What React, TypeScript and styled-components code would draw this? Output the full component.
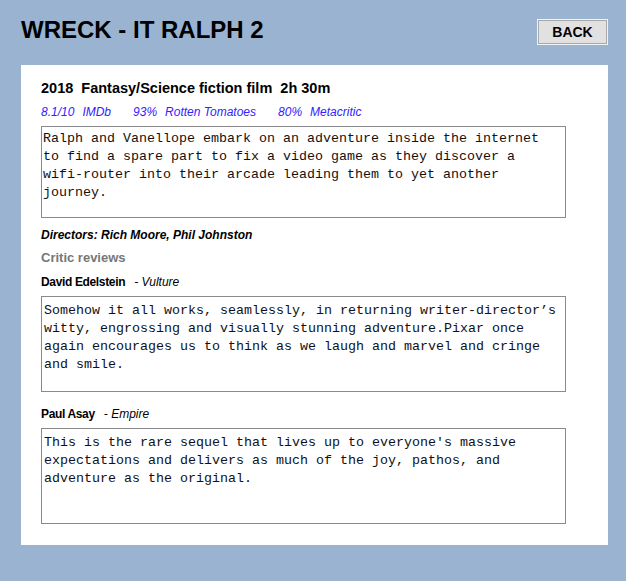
import styled, { createGlobalStyle } from "styled-components";

const GlobalStyle = createGlobalStyle`
  body {
    margin: 0;
    background-color: #99b3d1;
    font-family: "Liberation Sans", Arial, sans-serif;
    color: #000;
  }
`;

type Rating = { value: string; source: string };
type Review = { critic: string; outlet: string; text: string };

const ratings: Rating[] = [
  { value: "8.1/10", source: "IMDb" },
  { value: "93%", source: "Rotten Tomatoes" },
  { value: "80%", source: "Metacritic" },
];

const reviews: Review[] = [
  {
    critic: "David Edelstein",
    outlet: "Vulture",
    text: "Somehow it all works, seamlessly, in returning writer-director\u2019s witty, engrossing and visually stunning adventure.Pixar once again encourages us to think as we laugh and marvel and cringe and smile.",
  },
  {
    critic: "Paul Asay",
    outlet: "Empire",
    text: "This is the rare sequel that lives up to everyone's massive expectations and delivers as much of the joy, pathos, and adventure as the original.",
  },
];

const App = () => {
  return (
    <>
      <GlobalStyle />
      <Page>
        <Header>
          <Title>WRECK - IT RALPH 2</Title>
          <BackBtn>BACK</BackBtn>
        </Header>

        <Card>
          <Facts>2018  Fantasy/Science fiction film  2h 30m</Facts>
          <Ratings>
            {ratings.map((r) => (
              <RatingItem key={r.source}>
                {r.value}
                <RatingSource>{r.source}</RatingSource>
              </RatingItem>
            ))}
          </Ratings>

          <TextBox $height={92} $top={3} $left={1}>
            Ralph and Vanellope embark on an adventure inside the internet to
            find a spare part to fix a video game as they discover a
            wifi-router into their arcade leading them to yet another journey.
          </TextBox>

          <Directors>Directors: Rich Moore, Phil Johnston</Directors>
          <SectionTitle>Critic reviews</SectionTitle>

          {reviews.map((rv, i) => (
            <ReviewBlock key={rv.critic} $first={i === 0}>
              <Critic>
                <CriticName>{rv.critic}</CriticName>
                <Outlet>- {rv.outlet}</Outlet>
              </Critic>
              <TextBox $height={96} $top={5} $left={2}>
                {rv.text}
              </TextBox>
            </ReviewBlock>
          ))}
        </Card>
      </Page>
    </>
  );
};

const Page = styled.div`
  display: flex;
  flex-direction: column;
  width: 626px;
`;

const Header = styled.header`
  display: flex;
  justify-content: space-between;
  align-items: flex-start;
  padding: 16px 18px 0 21px;
`;

const Title = styled.h1`
  margin: 0;
  font-size: 24px;
  line-height: 28px;
  font-weight: bold;
`;

const BackBtn = styled.button`
  margin-top: 3px;
  width: 71px;
  height: 26px;
  padding: 0;
  background-color: #e1e1e1;
  border: 1px solid #f2f2f2;
  box-shadow: inset 0 0 0 1px #a9a9a9;
  font-family: "Liberation Sans", Arial, sans-serif;
  font-size: 14px;
  font-weight: bold;
  color: #000;
  cursor: pointer;
`;

const Card = styled.main`
  display: flex;
  flex-direction: column;
  align-items: flex-start;
  margin: 20px 18px 0 21px;
  padding: 14px 20px 21px 20px;
  background-color: #fff;
`;

const Facts = styled.div`
  font-size: 14.5px;
  line-height: 18px;
  font-weight: bold;
  white-space: pre;
`;

const Ratings = styled.div`
  display: flex;
  gap: 22px;
  margin-top: 7px;
  font-size: 12px;
  line-height: 16px;
  font-style: italic;
  color: #3322ff;
`;

const RatingItem = styled.span`
  display: flex;
`;

const RatingSource = styled.span`
  margin-left: 8px;
`;

const TextBox = styled.div<{ $height: number; $top: number; $left: number }>`
  box-sizing: border-box;
  width: 525px;
  height: ${({ $height }) => $height}px;
  margin-top: 6px;
  padding: ${({ $top }) => $top}px 3px 0 ${({ $left }) => $left}px;
  border: 1px solid #8a8a8e;
  font-family: "Liberation Mono", "Courier New", monospace;
  font-size: 13.333px;
  line-height: 18px;
  color: #111;
  overflow: hidden;
`;

const Directors = styled.div`
  margin-top: 9px;
  font-size: 12px;
  line-height: 16px;
  font-weight: bold;
  font-style: italic;
`;

const SectionTitle = styled.h2`
  margin: 7px 0 0;
  font-size: 13px;
  line-height: 16px;
  font-weight: bold;
  color: #777;
`;

const ReviewBlock = styled.section<{ $first: boolean }>`
  display: flex;
  flex-direction: column;
  margin-top: ${({ $first }) => ($first ? 8 : 14)}px;
`;

const Critic = styled.div`
  display: flex;
  font-size: 12px;
  line-height: 16px;
`;

const CriticName = styled.span`
  font-weight: bold;
  letter-spacing: -0.35px;
`;

const Outlet = styled.span`
  margin-left: 9px;
  font-style: italic;
`;

export default App;
